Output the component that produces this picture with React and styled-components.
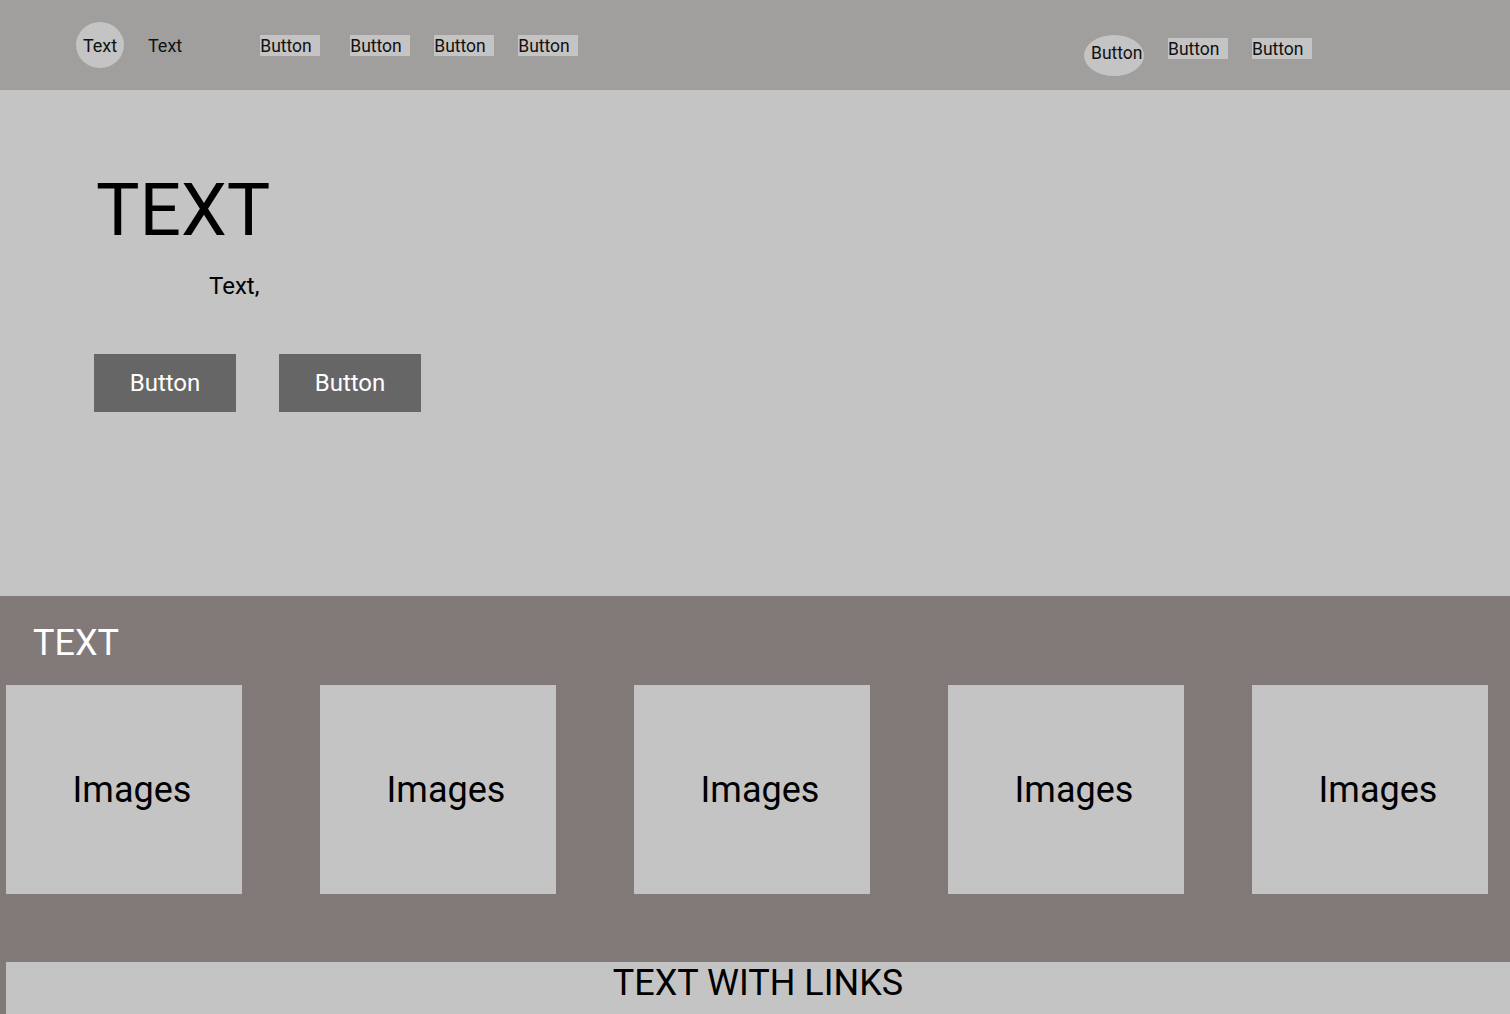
import React from 'react'
import styled, { createGlobalStyle } from 'styled-components'

const GlobalStyle = createGlobalStyle`
  body {
    margin: 0;
    font-family: Roboto, "Liberation Sans", sans-serif;
    background: #827979;
  }
`

const App = () => {
  return (
    <>
      <GlobalStyle />
      <Header>
        <Hold>
          <Logo>Text</Logo>
          <Brand>Text</Brand>
          <NavButton $first>Button</NavButton>
          <NavButton>Button</NavButton>
          <NavButton>Button</NavButton>
          <NavButton>Button</NavButton>
        </Hold>
        <Hold $right>
          <Pill>Button</Pill>
          <NavButton $right>Button</NavButton>
          <NavButton $right>Button</NavButton>
        </Hold>
      </Header>

      <Hero>
        <Title>TEXT</Title>
        <Subtitle>Text,</Subtitle>
        <Actions>
          <Action>Button</Action>
          <Action>Button</Action>
        </Actions>
      </Hero>

      <Gallery>
        <GalleryTitle>TEXT</GalleryTitle>
        <Grid>
          {[0, 1, 2, 3, 4].map((i) => (
            <Card key={i}>Images</Card>
          ))}
        </Grid>
      </Gallery>

      <Footer>TEXT WITH LINKS</Footer>
    </>
  )
}

export default App

const Header = styled.div`
  height: 90px;
  background: #a09f9d;
  display: flex;
  justify-content: space-between;
  box-sizing: border-box;
  padding: 0 198px 0 76px;
`
const Hold = styled.div`
  display: flex;
  align-items: flex-start;
  padding-top: ${(p) => (p.$right ? '35px' : '22px')};
`
const Logo = styled.div`
  width: 48px;
  height: 46px;
  border-radius: 50%;
  background: #c4c4c4;
  display: flex;
  align-items: center;
  justify-content: center;
  font-size: 18px;
  color: #111;
`
const Brand = styled.div`
  margin-left: 24px;
  height: 46px;
  line-height: 47px;
  font-size: 18px;
  color: #111;
`
const NavButton = styled.div`
  width: 60px;
  height: 21px;
  line-height: 23px;
  margin-top: ${(p) => (p.$right ? '3px' : '13px')};
  margin-left: ${(p) => (p.$first ? '78px' : '24px')};
  background: #c4c4c4;
  font-size: 17.5px;
  color: #111;
  white-space: nowrap;
  &:nth-child(4) {
    margin-left: 30px;
  }
`
const Pill = styled.div`
  width: 60px;
  height: 41px;
  border-radius: 50%;
  background: #c4c4c4;
  display: flex;
  align-items: center;
  padding: 0 0 5px 7px;
  box-sizing: border-box;
  font-size: 17.5px;
  color: #111;
  white-space: nowrap;
`
const Hero = styled.div`
  height: 506px;
  background: #c4c4c4;
  box-sizing: border-box;
  padding: 84px 0 0 94px;
`
const Title = styled.h1`
  margin: 0 0 0 2px;
  font-size: 73px;
  font-weight: 400;
  line-height: 1;
  color: #000;
`
const Subtitle = styled.p`
  margin: 27px 0 0 115px;
  font-size: 24px;
  line-height: 1;
  color: #000;
`
const Actions = styled.div`
  display: flex;
  gap: 43px;
  margin-top: 56px;
`
const Action = styled.button`
  width: 142px;
  height: 58px;
  border: 0;
  background: #666666;
  color: #fff;
  font-family: Roboto, sans-serif;
  font-size: 24px;
  padding: 0;
`
const Gallery = styled.div`
  height: 366px;
  background: #827979;
  box-sizing: border-box;
  padding: 20px 0 0 6px;
`
const GalleryTitle = styled.h2`
  margin: 0 0 0 27px;
  font-size: 36px;
  font-weight: 400;
  line-height: 54px;
  color: #fff;
`
const Grid = styled.div`
  display: flex;
  gap: 78px;
  margin-top: 15px;
  & > div:last-child {
    margin-left: -10px;
  }
`
const Card = styled.div`
  width: 236px;
  height: 209px;
  background: #c4c4c4;
  display: flex;
  align-items: center;
  justify-content: center;
  padding-left: 16px;
  box-sizing: border-box;
  font-size: 36px;
  color: #000;
`
const Footer = styled.div`
  margin-left: 6px;
  height: 60px;
  background: #c4c4c4;
  text-align: center;
  font-size: 36px;
  line-height: 42px;
  color: #000;
`
